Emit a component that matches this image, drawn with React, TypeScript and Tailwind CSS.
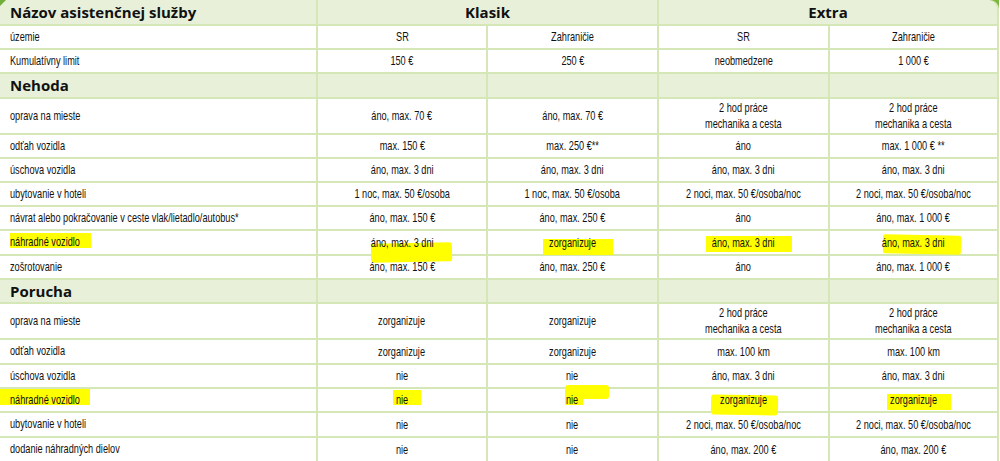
import React from "react";

type Row = {
  label: string;
  cells: React.ReactNode[];
  hl?: (string | null)[];
  hl2?: (string | null)[];
};

const two = (a: string, b: string) => (
  <>
    {a}
    <br />
    {b}
  </>
);

const nehoda: Row[] = [
  {
    label: "oprava na mieste",
    cells: ["áno, max. 70 €", "áno, max. 70 €", two("2 hod práce", "mechanika a cesta"), two("2 hod práce", "mechanika a cesta")],
  },
  { label: "odťah vozidla", cells: ["max. 150 €", "max. 250 €**", "áno", "max. 1 000 € **"] },
  { label: "úschova vozidla", cells: ["áno, max. 3 dni", "áno, max. 3 dni", "áno, max. 3 dni", "áno, max. 3 dni"] },
  {
    label: "ubytovanie v hoteli",
    cells: ["1 noc, max. 50 €/osoba", "1 noc, max. 50 €/osoba", "2 noci, max. 50 €/osoba/noc", "2 noci, max. 50 €/osoba/noc"],
  },
  {
    label: "návrat alebo pokračovanie v ceste vlak/lietadlo/autobus*",
    cells: ["áno, max. 150 €", "áno, max. 250 €", "áno", "áno, max. 1 000 €"],
  },
  {
    label: "náhradné vozidlo",
    cells: ["áno, max. 3 dni", "zorganizuje", "áno, max. 3 dni", "áno, max. 3 dni"],
    hl: [
      "left-[10px] top-[2px] w-[81px] h-[15px]",
      "left-[53px] top-[12px] w-[81px] h-[19px] rounded-[3px] -rotate-1",
      "left-[55px] top-[8px] w-[70px] h-[16px]",
      "left-[47px] top-[5px] w-[86px] h-[16px]",
      "left-[53px] top-[4px] w-[78px] h-[19px] rotate-1 rounded-[2px]",
    ],
  },
  { label: "zošrotovanie", cells: ["áno, max. 150 €", "áno, max. 250 €", "áno", "áno, max. 1 000 €"] },
];

const porucha: Row[] = [
  {
    label: "oprava na mieste",
    cells: ["zorganizuje", "zorganizuje", two("2 hod práce", "mechanika a cesta"), two("2 hod práce", "mechanika a cesta")],
  },
  { label: "odťah vozidla", cells: ["zorganizuje", "zorganizuje", "max. 100 km", "max. 100 km"] },
  { label: "úschova vozidla", cells: ["nie", "nie", "áno, max. 3 dni", "áno, max. 3 dni"] },
  {
    label: "náhradné vozidlo",
    cells: ["nie", "nie", "zorganizuje", "zorganizuje"],
    hl: [
      "left-[0px] top-[0px] w-[90px] h-[16px]",
      "left-[75px] top-[1px] w-[28px] h-[15px]",
      "left-[77px] top-[-4px] w-[44px] h-[14px] rounded-[3px]",
      "left-[52px] top-[6px] w-[67px] h-[20px] rounded-[3px] rotate-1",
      "left-[57px] top-[5px] w-[64px] h-[16px]",
    ],
    hl2: [null, null, "left-[77px] top-[6px] w-[18px] h-[10px]", null, null],
  },
  {
    label: "ubytovanie v hoteli",
    cells: ["nie", "nie", "2 noci, max. 50 €/osoba/noc", "2 noci, max. 50 €/osoba/noc"],
  },
  { label: "dodanie náhradných dielov", cells: ["nie", "nie", "áno, max. 200 €", "áno, max. 200 €"] },
];

const top: Row[] = [
  { label: "územie", cells: ["SR", "Zahraničie", "SR", "Zahraničie"] },
  { label: "Kumulatívny limit", cells: ["150 €", "250 €", "neobmedzene", "1 000 €"] },
];

const HEAD = "bg-[#e8f0da]";

function Hl({ c }: { c?: string | null }) {
  if (!c) return null;
  return <span className={`absolute z-10 bg-[#ffff00] ${c}`} />;
}

function BodyRow({ r }: { r: Row }) {
  return (
    <>
      <div className="relative flex items-center bg-white pl-[10px]">
        <Hl c={r.hl?.[0]} />
        <span className="relative z-20 inline-block origin-left scale-x-[0.68] whitespace-nowrap">{r.label}</span>
      </div>
      {r.cells.map((c, i) => (
        <div key={i} className="relative flex items-center justify-center bg-white">
          <Hl c={r.hl?.[i + 1]} />
          <Hl c={r.hl2?.[i + 1]} />
          <span className="relative z-20 inline-block scale-x-[0.68] whitespace-nowrap text-center leading-[16px]">
            {c}
          </span>
        </div>
      ))}
    </>
  );
}

function Section({ title }: { title: string }) {
  return (
    <>
      <div className={`${HEAD} flex items-center pl-[10px] font-['Open_Sans',sans-serif] text-[15px] font-bold`}>
        {title}
      </div>
      <div className={HEAD} />
      <div className={HEAD} />
      <div className={HEAD} />
      <div className={HEAD} />
    </>
  );
}

export default function App() {
  return (
    <div className="w-[1000px] bg-white">
      <div className="relative grid w-[999px] grid-cols-[316px_168px_169px_169px_167px] grid-rows-[24px_22px_22px_23px_34px_22px_22px_22px_22px_23px_22px_22px_34px_23px_22px_22px_23px_23px] gap-[2px] overflow-hidden bg-[#d5e6b7] pr-[2px] font-['Liberation_Sans',Arial,sans-serif] text-[13.5px] text-[#111111]">
        <div className={`${HEAD} flex items-center pl-[10px] font-['Open_Sans',sans-serif] text-[15px] font-bold`}>
          Názov asistenčnej služby
        </div>
        <div className={`${HEAD} col-span-2 flex items-center justify-center font-['Open_Sans',sans-serif] text-[15px] font-bold`}>
          Klasik
        </div>
        <div className={`${HEAD} col-span-2 flex items-center justify-center rounded-tr-[9px] font-['Open_Sans',sans-serif] text-[15px] font-bold`}>
          Extra
        </div>
        {top.map((r, i) => (
          <BodyRow key={"t" + i} r={r} />
        ))}
        <Section title="Nehoda" />
        {nehoda.map((r, i) => (
          <BodyRow key={"n" + i} r={r} />
        ))}
        <Section title="Porucha" />
        {porucha.map((r, i) => (
          <BodyRow key={"p" + i} r={r} />
        ))}
        <svg className="absolute left-0 top-0 z-30" width="6" height="6" viewBox="0 0 6 6">
          <polygon points="0,0 6,0 0,6" fill="#6fae3a" />
        </svg>
        <svg className="absolute right-0 top-0 z-30" width="9" height="9" viewBox="0 0 9 9">
          <path d="M0,0 L9,0 L9,9 A9,9 0 0 0 0,0 Z" fill="#7cb83f" />
        </svg>
      </div>
    </div>
  );
}
